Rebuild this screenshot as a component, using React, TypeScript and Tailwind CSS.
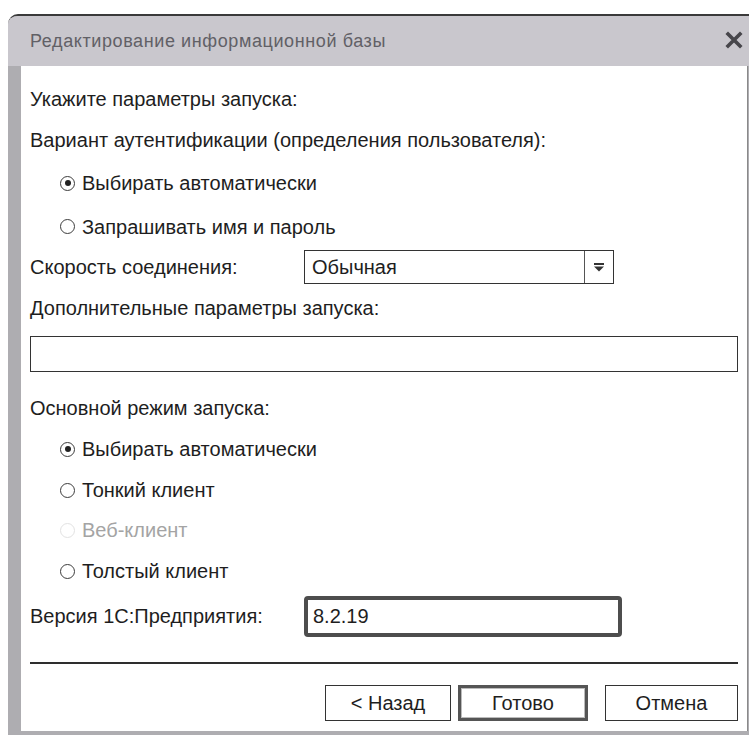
import type { ReactNode } from "react";

// Small radio glyph in the classic 1C / Windows style
function Radio({ checked = false, disabled = false }: { checked?: boolean; disabled?: boolean }) {
  return (
    <span
      className={
        "flex items-center justify-center w-[15px] h-[15px] rounded-full border-[1.5px] bg-white " +
        (disabled ? "border-[#e2e2e2]" : "border-[#3c3c3c]")
      }
    >
      {checked && <span className="w-[6px] h-[6px] rounded-full bg-[#222]" />}
    </span>
  );
}

function RadioRow({
  label,
  checked,
  disabled,
  h,
}: {
  label: string;
  checked?: boolean;
  disabled?: boolean;
  h: string;
}) {
  return (
    <div className={"flex items-center pl-[30px] gap-[7px] " + h}>
      <Radio checked={checked} disabled={disabled} />
      <span className={disabled ? "text-[#a4a4a4]" : "text-[#1e1e1e]"}>{label}</span>
    </div>
  );
}

function Row({ h, children }: { h: string; children: ReactNode }) {
  return <div className={"flex items-center text-[#1e1e1e] " + h}>{children}</div>;
}

function DialogButton({ w, def, children }: { w: string; def?: boolean; children: ReactNode }) {
  return (
    <button
      className={
        "h-[36px] bg-white text-[#1e1e1e] flex items-center justify-center " +
        w +
        (def ? " border-[3px] border-[#555] shadow-[inset_0_0_0_1px_#bbb]" : " border-[1.5px] border-[#333]")
      }
    >
      {children}
    </button>
  );
}

export default function App() {
  return (
    <div className="w-[752px] h-[739px] bg-white pt-[14px] pl-[8px] pr-[3px] pb-[4px] font-['Liberation_Sans',Arial,sans-serif] text-[20px] leading-none">
      <div className="h-full flex flex-col rounded-tl-[10px] border-t-2 border-[#3a3a3a] bg-[#aeadb1] overflow-hidden">
        {/* title bar */}
        <div className="h-[50px] shrink-0 flex items-center justify-between pl-[22px] pr-[6px] bg-[#c9c7cd]">
          <span className="text-[18px] tracking-[0.6px] text-[#616066]">Редактирование информационной базы</span>
          <svg width="18" height="18" viewBox="0 0 18 18" className="mb-[2px]">
            <path d="M3 3 L15 15 M15 3 L3 15" stroke="#47464b" strokeWidth="3.6" strokeLinecap="square" />
          </svg>
        </div>

        {/* left frame + client area */}
        <div className="flex-1 flex pl-[13px] pr-[1px] pb-[4px]">
          <div className="flex-1 flex flex-col bg-white pl-[9px] pr-[9px] pt-[12px] border-r border-[#8a8a8a]">
            <Row h="h-[41px]">Укажите параметры запуска:</Row>
            <Row h="h-[41px]">Вариант аутентификации (определения пользователя):</Row>
            <RadioRow h="h-[46px]" label="Выбирать автоматически" checked />
            <RadioRow h="h-[41px]" label="Запрашивать имя и пароль" />

            <Row h="h-[40px]">
              <span className="w-[274px] shrink-0">Скорость соединения:</span>
              <div className="w-[310px] h-[34px] flex border-[1.5px] border-[#333] bg-white">
                <span className="flex-1 flex items-center pl-[7px]">Обычная</span>
                <span className="w-[29px] flex items-center justify-center border-l-[1.5px] border-[#555]">
                  <svg width="12" height="9" viewBox="0 0 12 9">
                    <rect x="1" y="0" width="10" height="2" fill="#333" />
                    <path d="M1 3.5 H11 L6 8.5 Z" fill="#333" />
                  </svg>
                </span>
              </div>
            </Row>

            <Row h="h-[41px]">Дополнительные параметры запуска:</Row>
            <div className="h-[52px] pt-[8px]">
              <div className="h-[36px] border-[1.5px] border-[#333] bg-white" />
            </div>

            <Row h="h-[48px] pt-[8px]">Основной режим запуска:</Row>
            <RadioRow h="h-[42px]" label="Выбирать автоматически" checked />
            <RadioRow h="h-[40px]" label="Тонкий клиент" />
            <RadioRow h="h-[40px]" label="Веб-клиент" disabled />
            <RadioRow h="h-[42px]" label="Толстый клиент" />

            <Row h="h-[48px]">
              <span className="w-[274px] shrink-0">Версия 1С:Предприятия:</span>
              <div className="w-[318px] h-[41px] flex items-center pl-[5px] rounded-[4px] border-[4px] border-[#4d4d4d] bg-white">
                8.2.19
              </div>
            </Row>

            <div className="mt-[22px] h-[2px] bg-[#2e2e2e]" />

            <div className="mt-[21px] flex justify-end">
              <DialogButton w="w-[126px]">&lt; Назад</DialogButton>
              <span className="w-[7px]" />
              <DialogButton w="w-[130px]" def>
                Готово
              </DialogButton>
              <span className="w-[17px]" />
              <DialogButton w="w-[133px]">Отмена</DialogButton>
            </div>
          </div>
        </div>
      </div>
    </div>
  );
}
